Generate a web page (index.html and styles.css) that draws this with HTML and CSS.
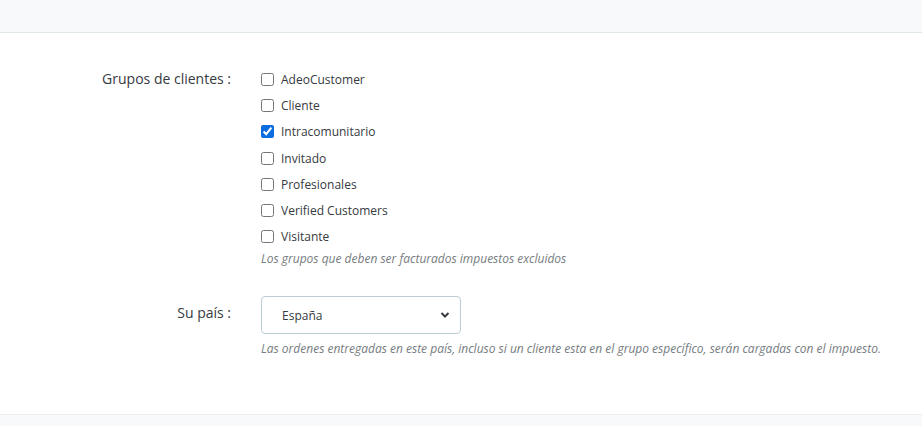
FILE: index.html
```html
<!DOCTYPE html>
<html lang="es">
<head>
<meta charset="utf-8">
<link rel="stylesheet" href="styles.css">
</head>
<body>
<div class="top-band"></div>
<main class="form">
  <div class="form-row">
    <div class="label">Grupos de clientes :</div>
    <div class="field">
      <label class="check"><input type="checkbox">AdeoCustomer</label>
      <label class="check"><input type="checkbox">Cliente</label>
      <label class="check"><input type="checkbox" checked>Intracomunitario</label>
      <label class="check"><input type="checkbox">Invitado</label>
      <label class="check"><input type="checkbox">Profesionales</label>
      <label class="check"><input type="checkbox">Verified Customers</label>
      <label class="check"><input type="checkbox">Visitante</label>
      <p class="help">Los grupos que deben ser facturados impuestos excluidos</p>
    </div>
  </div>
  <div class="form-row country">
    <div class="label label-select">Su país :</div>
    <div class="field">
      <div class="select">
        <span>España</span>
        <svg class="chev" viewBox="0 0 10 8" width="10" height="8"><path d="M1.5 2 L5 5.5 L8.5 2" fill="none" stroke="#363a41" stroke-width="2"/></svg>
      </div>
      <p class="help">Las ordenes entregadas en este país, incluso si un cliente esta en el grupo específico, serán cargadas con el impuesto.</p>
    </div>
  </div>
</main>
<div class="bottom-band"></div>
</body>
</html>
```
FILE: styles.css
```css
* { box-sizing: border-box; }
html, body { margin: 0; padding: 0; }
body {
  width: 922px;
  height: 426px;
  overflow: hidden;
  background: #fff;
  font-family: "Open Sans", "Liberation Sans", sans-serif;
  color: #363a41;
  display: flex;
  flex-direction: column;
}
.top-band {
  height: 33px;
  background: #f8f9fb;
  border-bottom: 1px solid #dfe7eb;
  flex: none;
}
.form {
  padding-top: 33px;
  flex: 1;
  display: flex;
  flex-direction: column;
  gap: 28px;
}
.form-row {
  display: grid;
  grid-template-columns: 231px 1fr;
  column-gap: 30px;
}
.label {
  text-align: right;
  font-size: 14px;
  line-height: 26px;
  color: #363a41;
}
.label-select { line-height: 34px; }
.field { display: flex; flex-direction: column; align-items: flex-start; }
.check {
  display: flex;
  align-items: center;
  height: 26.3px;
  font-size: 12px;
  color: #363a41;
}
.check input {
  width: 13px;
  height: 13px;
  margin: 0 7px 0 0;
  accent-color: #0b6de0;
}
.help {
  margin: 0;
  font-size: 12px;
  font-style: italic;
  color: #767c80;
  line-height: 18px;
}
.select {
  width: 200px;
  height: 38px;
  border: 1px solid #bbcdd2;
  border-radius: 4px;
  display: flex;
  align-items: center;
  justify-content: space-between;
  padding: 0 10px 0 20px;
  font-size: 12px;
  margin-bottom: 6px;
}
.chev { display: block; }
.bottom-band {
  height: 12px;
  background: #f8f9fb;
  border-top: 1px solid #eceff1;
  flex: none;
}
```
